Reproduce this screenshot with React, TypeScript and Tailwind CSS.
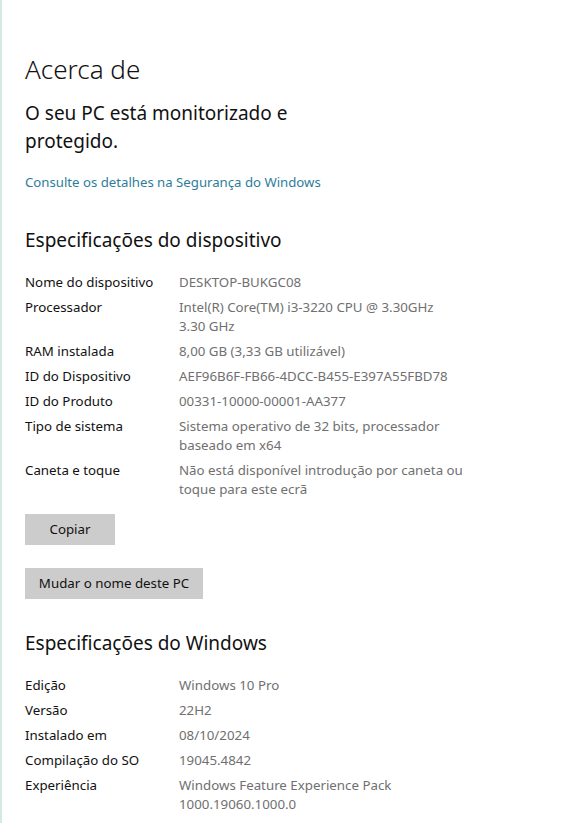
import React from "react";

const device: [string, string[]][] = [
  ["Nome do dispositivo", ["DESKTOP-BUKGC08"]],
  ["Processador", ["Intel(R) Core(TM) i3-3220 CPU @ 3.30GHz", "3.30 GHz"]],
  ["RAM instalada", ["8,00 GB (3,33 GB utilizável)"]],
  ["ID do Dispositivo", ["AEF96B6F-FB66-4DCC-B455-E397A55FBD78"]],
  ["ID do Produto", ["00331-10000-00001-AA377"]],
  ["Tipo de sistema", ["Sistema operativo de 32 bits, processador", "baseado em x64"]],
  ["Caneta e toque", ["Não está disponível introdução por caneta ou", "toque para este ecrã"]],
];

const windows: [string, string[]][] = [
  ["Edição", ["Windows 10 Pro"]],
  ["Versão", ["22H2"]],
  ["Instalado em", ["08/10/2024"]],
  ["Compilação do SO", ["19045.4842"]],
  ["Experiência", ["Windows Feature Experience Pack", "1000.19060.1000.0"]],
];

function Rows({ rows }: { rows: [string, string[]][] }) {
  return (
    <div className="flex flex-col gap-[6px]">
      {rows.map(([k, v]) => (
        <div key={k} className="flex text-[13.3px] leading-[19px]">
          <div className="w-[154px] shrink-0 text-[#111]">{k}</div>
          <div className="text-[#707070]">
            {v.map((l) => (
              <div key={l}>{l}</div>
            ))}
          </div>
        </div>
      ))}
    </div>
  );
}

export default function App() {
  return (
    <div
      className="w-[587px] h-[823px] overflow-hidden bg-white border-l-2 border-[#d6e8e4] pl-[23px] pt-[52px]"
      style={{ fontFamily: '"Noto Sans", "Open Sans", sans-serif' }}
    >
      <h1 className="text-[26px] font-light leading-[34px] text-[#111]">Acerca de</h1>
      <p className="mt-[13px] text-[19px] leading-[28px] text-[#111]">
        O seu PC está monitorizado e<br />protegido.
      </p>
      <div className="mt-[17px] text-[13.2px] leading-[20px] text-[#2d7d9a]">
        Consulte os detalhes na Segurança do Windows
      </div>
      <h2 className="mt-[34px] text-[19px] leading-[28px] text-[#111]">Especificações do dispositivo</h2>
      <div className="mt-[19px]">
        <Rows rows={device} />
      </div>
      <div className="mt-[15px] flex flex-col items-start gap-[23px]">
        <button className="w-[90px] h-[31px] bg-[#cccccc] text-[13.3px] text-[#111]">Copiar</button>
        <button className="w-[178px] h-[31px] bg-[#cccccc] text-[13.3px] text-[#111]">Mudar o nome deste PC</button>
      </div>
      <h2 className="mt-[30px] text-[19px] leading-[28px] text-[#111]">Especificações do Windows</h2>
      <div className="mt-[19px]">
        <Rows rows={windows} />
      </div>
    </div>
  );
}
